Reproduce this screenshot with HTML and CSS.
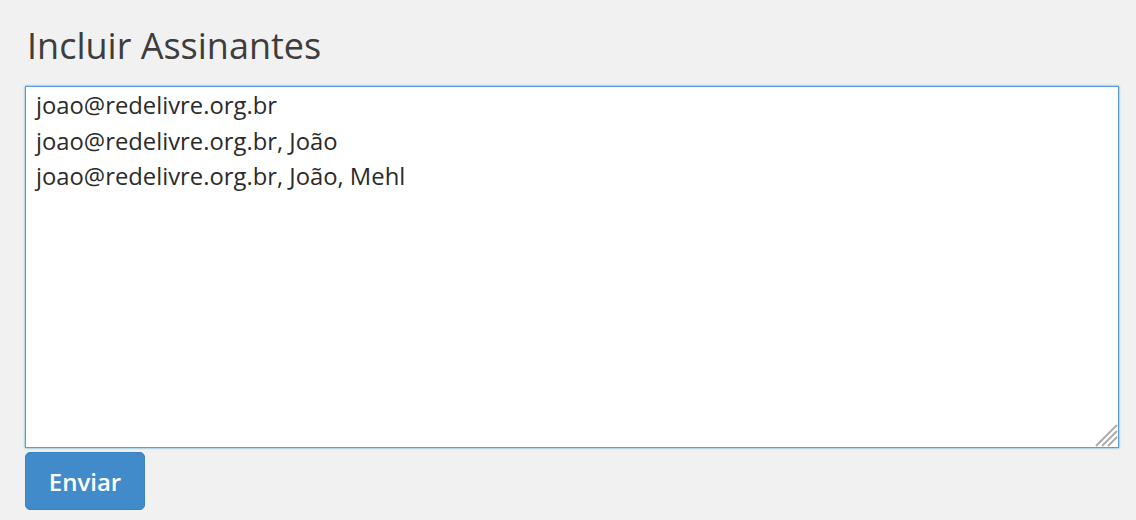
FILE: index.html
```html
<!DOCTYPE html>
<html>
<head>
<meta charset="utf-8">
<link rel="stylesheet" href="styles.css">
</head>
<body>
<div class="page">
  <h1 class="title">Incluir Assinantes</h1>
  <div class="field">
    <textarea class="box">joao@redelivre.org.br
joao@redelivre.org.br, João
joao@redelivre.org.br, João, Mehl</textarea>
    <svg class="grip" width="24" height="24" viewBox="0 0 24 24">
      <line x1="23" y1="2" x2="2" y2="23" stroke="#a8a8a8" stroke-width="1.8"/>
      <line x1="23" y1="8" x2="8" y2="23" stroke="#a8a8a8" stroke-width="1.8"/>
      <line x1="23" y1="14" x2="14" y2="23" stroke="#a8a8a8" stroke-width="1.8"/>
    </svg>
  </div>
  <button class="btn">Enviar</button>
</div>
</body>
</html>
```

FILE: styles.css
```css
html, body {
  margin: 0;
  padding: 0;
  background: #f1f1f1;
}
.page {
  padding: 24px 17px 0 25px;
  display: flex;
  flex-direction: column;
  align-items: flex-start;
  font-family: "Open Sans", sans-serif;
}
.title {
  margin: 0 0 18px 2px;
  font-weight: 400;
  font-size: 36px;
  line-height: 44px;
  color: #3d3d3d;
}
.field {
  position: relative;
  width: 1094px;
  height: 362px;
}
.box {
  display: block;
  box-sizing: border-box;
  width: 100%;
  height: 100%;
  margin: 0;
  padding: 1px 10px;
  border: 1px solid #5b9dd9;
  box-shadow: 0 0 2px rgba(30, 140, 190, 0.8);
  background: #fff;
  font-family: "Open Sans", sans-serif;
  font-size: 23.8px;
  line-height: 35.5px;
  color: #2b2b2b;
  outline: none;
  resize: none;
}
.grip {
  position: absolute;
  right: 1px;
  bottom: 1px;
  pointer-events: none;
}
.btn {
  margin-top: 4px;
  width: 120px;
  height: 58px;
  border: 1px solid #3b82c1;
  border-radius: 5px;
  background: #428bca;
  color: #fff;
  font-family: "Open Sans", sans-serif;
  font-weight: 600;
  font-size: 24px;
  padding: 0;
}
```
